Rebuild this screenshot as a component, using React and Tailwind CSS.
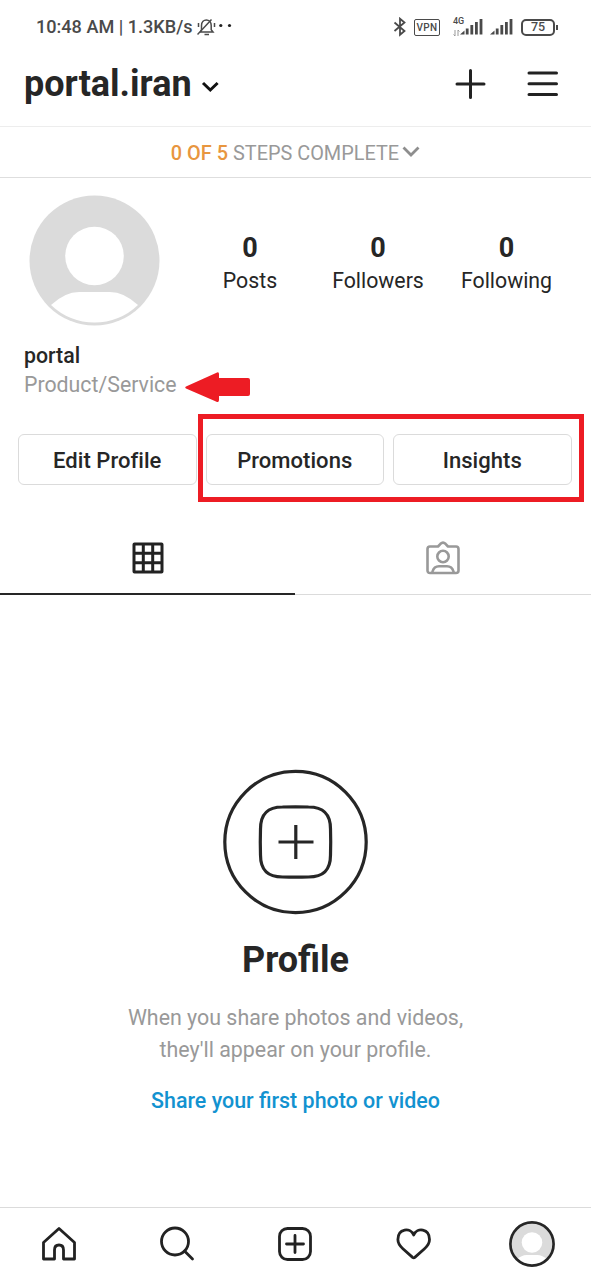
/**
 * Tela de perfil (conta profissional, sem publicações)
 */

const STATS = [
    { label: 'Posts', value: 0, className: 'w-[128px]' },
    { label: 'Followers', value: 0, className: 'w-[128px]' },
    { label: 'Following', value: 0, className: 'w-[129px]' },
];

export default function App() {
    return (
        <div className="flex h-[1280px] w-[591px] flex-col overflow-hidden bg-white font-['Roboto',sans-serif] text-[#262626]">
            <StatusBar />
            <Header />
            <StepsBanner />
            <ProfileInfo />
            <ProfileActions />
            <ProfileTabs />
            <EmptyState />
            <BottomNav />
        </div>
    );
}

/**
 * Barra de status do sistema
 */
const StatusBar = () => (
    <div className="flex h-[54px] shrink-0 items-center justify-between pl-9 pr-[33px] text-[#4a4a4a]">
        <div className="flex items-center">
            <span className="whitespace-nowrap text-[18.100px] font-medium leading-6">10:48 AM | 1.3KB/s</span>
            <svg className="ml-1 h-5 w-9" viewBox="0 0 36 20" fill="none" stroke="currentColor" strokeWidth="1.500">
                <path d="M3.500 15 H16 L14.200 12.800 V8.500 C14.200 1 4.500 1 4.500 8.500 V12.800 Z M7.500 17.500 H12" />
                <path d="M0.500 17.500 L14.500 2.500 M1.500 6 V10 M17.500 6 V10" />
                <circle cx="23.800" cy="8.500" r="1.600" fill="#222" stroke="none" />
                <circle cx="32.500" cy="8.500" r="1.600" fill="#222" stroke="none" />
            </svg>
        </div>
        <div className="flex items-center">
            <svg className="h-5 w-[14px]" viewBox="0 0 14 20" fill="none" stroke="currentColor" strokeWidth="1.800">
                <path d="M1.500 5.500 L11.500 14 L7 17.800 V1.700 L11.500 5.500 L1.500 14" />
            </svg>
            <span className="ml-[7px] flex h-[17px] w-[26px] items-center justify-center rounded-[2px] border-[1.500px] border-current text-[10px] font-medium tracking-[0.3px]">
                VPN
            </span>
            <div className="ml-[13px] flex items-end">
                <div className="flex h-[21px] w-[7px] flex-col justify-between pb-px">
                    <span className="whitespace-nowrap text-[9px] font-medium leading-[9px]">4G</span>
                    <svg className="h-2 w-2 shrink-0" viewBox="0 0 8 8" fill="none" stroke="#999" strokeWidth="1">
                        <path d="M2 1 V7 M0.500 5.500 L2 7 M5 7 V1 L6.500 2.500" />
                    </svg>
                </div>
                <SignalBars className="mb-[2px]" />
                <SignalBars className="mb-[2px] ml-[7px]" />
            </div>
            <div className="ml-[8px] flex items-center gap-[1px]">
                <span className="flex h-[17px] w-[34px] items-center justify-center rounded-[5px] border-2 border-current text-[12.500px] font-medium leading-none">
                    75
                </span>
                <span className="h-[5px] w-[2px] bg-[#4a4a4a]" />
            </div>
        </div>
    </div>
);

const SignalBars = ({ className = '' }) => (
    <svg className={`h-[18px] w-[23px] ${className}`} viewBox="0 0 23 18" fill="currentColor">
        <path d="M0 16.500 L4.500 12.500 V16.500 Z M5.800 10.500 H8.600 V16.500 H5.800 Z M10.400 7 H13.200 V16.500 H10.400 Z M15 4 H17.800 V16.500 H15 Z M19.600 1 H22.400 V16.500 H19.600 Z" />
    </svg>
);

/**
 * Cabeçalho com o nome de usuário
 */
const Header = () => (
    <header className="flex h-[72px] shrink-0 items-start justify-between pl-6 pr-8">
        <div className="flex items-start pt-[5px]">
            <h1 className="text-[36px] font-bold leading-[50px]">portal.iran</h1>
            <svg className="ml-[9px] mt-[18px] h-5 w-5" viewBox="0 0 20 20" fill="none" stroke="#111" strokeWidth="3">
                <path d="M2 6 L9.300 13 L16.600 6" />
            </svg>
        </div>
        <div className="flex gap-[38px] pt-[13px]">
            <svg className="h-[34px] w-[34px]" viewBox="0 0 34 34" stroke="#222" strokeWidth="3" strokeLinecap="round">
                <path d="M17.500 3.500 V30.500 M4 17 H31" />
            </svg>
            <svg className="h-[34px] w-[34px]" viewBox="0 0 34 34" stroke="#222" strokeWidth="3" strokeLinecap="round">
                <path d="M4 6 H31.500 M4 16.700 H31.500 M4 27.400 H31.500" />
            </svg>
        </div>
    </header>
);

const StepsBanner = () => (
    <div className="flex h-[52px] shrink-0 items-center justify-center border-y border-t-[#ededed] border-b-[#dedede] text-[19.900px] text-[#999]">
        <span className="whitespace-nowrap pt-[3px]">
            <span className="font-medium text-[#e8963f]">0 OF 5</span> STEPS COMPLETE
        </span>
        <svg className="ml-[3px] h-4 w-[18px]" viewBox="0 0 18 16" fill="none" stroke="#8e8e8e" strokeWidth="2.800">
            <path d="M1.500 3.500 L9 11 L16.500 3.500" />
        </svg>
    </div>
);

/**
 * Avatar, contadores e categoria
 */
const ProfileInfo = () => (
    <section className="h-[256px] shrink-0">
        <div className="flex pt-[17px]">
            <Avatar className="ml-[29px] h-[131px] w-[131px]" />
            <div className="ml-[26px] flex pt-[37px] text-center">
                {STATS.map((stat) => (
                    <div key={stat.label} className={stat.className}>
                        <p className="text-[27px] font-bold leading-8">{stat.value}</p>
                        <p className="text-[21.300px] leading-[33px]">{stat.label}</p>
                    </div>
                ))}
            </div>
        </div>
        <div className="pl-6 pt-[16px]">
            <p className="text-[21.300px] font-medium leading-[28px]">portal</p>
            <div className="flex h-[30px] items-start">
                <span className="pt-px text-[21.300px] leading-7 text-[#999]">Product/Service</span>
                <svg className="ml-[8px] mt-[2px] h-[30px] w-[66px]" viewBox="0 0 66 30" fill="#ed1c24">
                    <path d="M1 14.500 L31 1 Q34 -1 34 2 V6 H63 Q65 6 65 8 V22 Q65 24 63 24 H34 V28 Q34 31 31 29.500 L1 16.500 Q-0.500 15.500 1 14.500 Z" />
                </svg>
            </div>
        </div>
    </section>
);

const Avatar = ({ className, ring = false }) => (
    <svg className={className} viewBox="0 0 131 131">
        <circle cx="65.500" cy="65.500" r="65" fill="#dbdbdb" />
        <circle cx="65.500" cy="61" r="29.300" fill="#fff" />
        <path d="M22 110 Q36 97 50 97 H81 Q95 97 109 110 A62.500 62.500 0 0 1 22 110 Z" fill="#fff" />
        {ring && <circle cx="65.500" cy="65.500" r="61.500" fill="none" stroke="#262626" strokeWidth="7.500" />}
    </svg>
);

/**
 * Botões do perfil, com destaque nas ferramentas profissionais
 */
const ProfileActions = () => (
    <section className="relative flex h-[88px] shrink-0 gap-[9px] pl-[18px]">
        <ActionButton>Edit Profile</ActionButton>
        <ActionButton>Promotions</ActionButton>
        <ActionButton>Insights</ActionButton>
        <div className="absolute left-[198px] top-[-20px] h-[88px] w-[386px] border-[5px] border-[#ed1c24]" />
    </section>
);

const ActionButton = ({ children }) => (
    <button className="h-[51px] w-[178.500px] rounded-[6px] border-[1.500px] border-[#dbdbdb] pt-px text-[22px] font-medium tracking-[0.050px]">
        {children}
    </button>
);

const ProfileTabs = () => (
    <div className="flex h-[73px] shrink-0">
        <div className="flex w-[295px] justify-center border-b-2 border-[#262626] pt-5">
            <svg className="h-8 w-8" viewBox="0 0 32 32" fill="none" stroke="#222" strokeWidth="3">
                <rect x="2" y="2" width="28" height="28" rx="0.500" />
                <path d="M11.300 2 V30 M20.700 2 V30 M2 11.300 H30 M2 20.700 H30" />
            </svg>
        </div>
        <div className="flex flex-1 justify-center border-b border-[#dbdbdb] pt-[18px]">
            <svg className="h-9 w-9" viewBox="0 0 36 36" fill="none" stroke="#999" strokeWidth="2.600" strokeLinejoin="round">
                <path d="M5 6.500 H13 L15.500 3.800 Q18 1.500 20.500 3.800 L23 6.500 H31 Q33.500 6.500 33.500 9 V30.500 Q33.500 33 31 33 H5 Q2.500 33 2.500 30.500 V9 Q2.500 6.500 5 6.500 Z" />
                <circle cx="18" cy="16.500" r="5.700" />
                <path d="M7.500 32.500 V31.500 Q9 26.300 14 26.300 H22 Q27 26.300 28.500 31.500 V32.500" />
            </svg>
        </div>
    </div>
);

/**
 * Empty State
 */
const EmptyState = () => (
    <main className="flex min-h-0 flex-1 flex-col items-center pt-[174px] text-center">
        <svg className="h-[146px] w-[146px] shrink-0" viewBox="0.500 0 146 146" fill="none" stroke="#262626" strokeWidth="3.200">
            <circle cx="73" cy="73" r="70.700" />
            <path d="M38 60 C38 45 45 38 60 38 C69 37.700 77 37.700 86 38 C101 38 108 45 108 60 C108.300 69 108.300 77 108 86 C108 101 101 108 86 108 C77 108.300 69 108.300 60 108 C45 108 38 101 38 86 C37.700 77 37.700 69 38 60 Z" />
            <path d="M73.300 56 V90 M56 73 H91" />
        </svg>
        <h2 className="mt-[21px] text-[36px] font-bold leading-[48px]">Profile</h2>
        <p className="mt-[18px] text-[21.400px] leading-8 text-[#999]">
            When you share photos and videos,
            <br />
            they'll appear on your profile.
        </p>
        <a className="mt-[19px] text-[21.450px] font-medium leading-8 text-[#1292d0]">Share your first photo or video</a>
    </main>
);

const BottomNav = () => (
    <nav className="grid h-[73px] shrink-0 grid-cols-5 items-center justify-items-center border-t border-[#dbdbdb]">
        <NavIcon>
            <path d="M2.500 16.500 L18 2.500 L33.500 16.500 V33 H22.500 V24 Q22.500 19 18 19 Q13.500 19 13.500 24 V33 H2.500 Z" />
        </NavIcon>
        <NavIcon>
            <circle cx="16" cy="15.500" r="13.500" />
            <path d="M25.500 25 L33.500 33" strokeLinecap="round" />
        </NavIcon>
        <NavIcon>
            <rect x="2.500" y="2.500" width="31" height="31" rx="8" />
            <path d="M18 9.500 V26.500 M9.500 18 H26.500" strokeLinecap="round" />
        </NavIcon>
        <NavIcon>
            <path d="M17.700 9 C21 1 33.500 2.500 33.500 13.500 C33.500 17.500 31.500 20 28.500 22.700 L18.800 31.400 Q17.700 32.300 16.600 31.400 L6.900 22.700 C3.900 20 1.900 17.500 1.900 13.500 C1.900 2.500 14.400 1 17.700 9 Z" />
        </NavIcon>
        <Avatar className="h-[46px] w-[46px]" ring />
    </nav>
);

const NavIcon = ({ children }) => (
    <svg className="h-9 w-9" viewBox="0 0 36 36" fill="none" stroke="#222" strokeWidth="2.800" strokeLinejoin="round">
        {children}
    </svg>
);
